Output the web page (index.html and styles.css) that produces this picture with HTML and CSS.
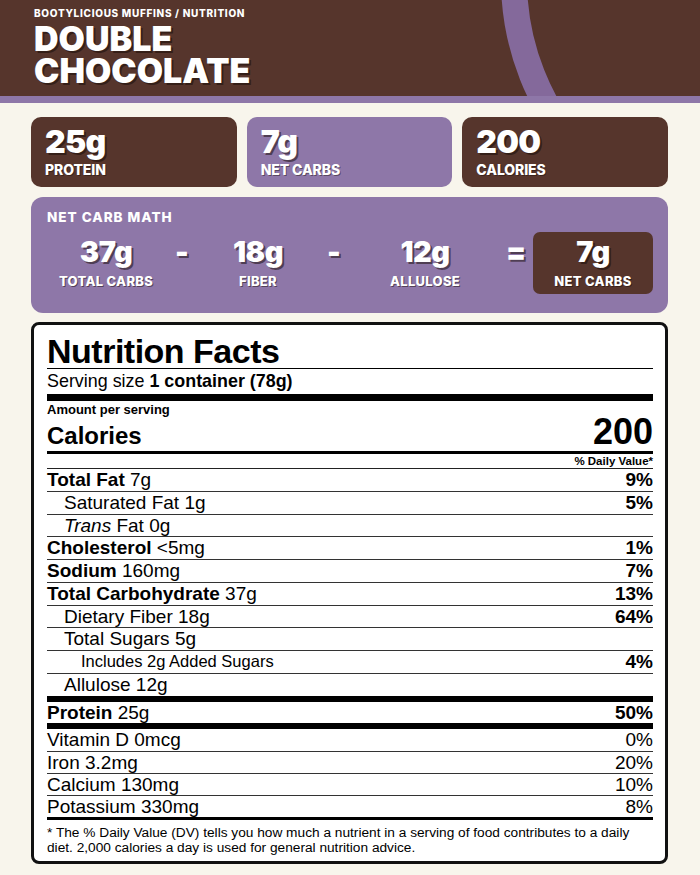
FILE: index.html
```html
<!DOCTYPE html>
<html lang="en">
<head>
<meta charset="utf-8">
<title>Double Chocolate – Nutrition</title>
<link rel="stylesheet" href="styles.css">
</head>
<body>
<header class="hero">
  <div class="ring"></div>
  <div class="crumb">BOOTYLICIOUS MUFFINS / NUTRITION</div>
  <h1 class="title"><span class="title-line">DOUBLE</span><span class="title-line">CHOCOLATE</span></h1>
</header>
<main class="content">
  <section class="stats">
    <div class="stat stat-brown"><div class="stat-num">25g</div><div class="stat-label">PROTEIN</div></div>
    <div class="stat stat-purple"><div class="stat-num">7g</div><div class="stat-label">NET CARBS</div></div>
    <div class="stat stat-brown"><div class="stat-num">200</div><div class="stat-label">CALORIES</div></div>
  </section>

  <section class="math">
    <div class="math-title">NET CARB MATH</div>
    <div class="math-row">
      <div class="term"><div class="term-num">37g</div><div class="term-label">TOTAL CARBS</div></div>
      <div class="op">-</div>
      <div class="term"><div class="term-num">18g</div><div class="term-label">FIBER</div></div>
      <div class="op">-</div>
      <div class="term"><div class="term-num">12g</div><div class="term-label">ALLULOSE</div></div>
      <div class="op">=</div>
      <div class="term result"><div class="term-num">7g</div><div class="term-label">NET CARBS</div></div>
    </div>
  </section>

  <section class="nf">
    <div class="nf-title">Nutrition Facts</div>
    <div class="nf-serving">Serving size <b>1 container (78g)</b></div>
    <div class="nf-amount">Amount per serving</div>
    <div class="nf-cal"><span class="nf-cal-label">Calories</span><span class="nf-cal-val">200</span></div>
    <div class="nf-dv">% Daily Value*</div>

    <div class="nf-row"><span><b>Total Fat</b> 7g</span><b>9%</b></div>
    <div class="nf-row indent1"><span>Saturated Fat 1g</span><b>5%</b></div>
    <div class="nf-row indent1"><span><i>Trans</i> Fat 0g</span><b></b></div>
    <div class="nf-row"><span><b>Cholesterol</b> &lt;5mg</span><b>1%</b></div>
    <div class="nf-row"><span><b>Sodium</b> 160mg</span><b>7%</b></div>
    <div class="nf-row"><span><b>Total Carbohydrate</b> 37g</span><b>13%</b></div>
    <div class="nf-row indent1"><span>Dietary Fiber 18g</span><b>64%</b></div>
    <div class="nf-row indent1"><span>Total Sugars 5g</span><b></b></div>
    <div class="nf-row indent2 small"><span>Includes 2g Added Sugars</span><b>4%</b></div>
    <div class="nf-row indent1 thick"><span>Allulose 12g</span><b></b></div>
    <div class="nf-row thick-protein"><span><b>Protein</b> 25g</span><b>50%</b></div>

    <div class="nf-row vit"><span>Vitamin D 0mcg</span><span>0%</span></div>
    <div class="nf-row vit"><span>Iron 3.2mg</span><span>20%</span></div>
    <div class="nf-row vit"><span>Calcium 130mg</span><span>10%</span></div>
    <div class="nf-row vit last"><span>Potassium 330mg</span><span>8%</span></div>

    <p class="nf-foot">* The % Daily Value (DV) tells you how much a nutrient in a serving of food contributes to a daily diet. 2,000 calories a day is used for general nutrition advice.</p>
  </section>
</main>
</body>
</html>
```

FILE: styles.css
```css
* { box-sizing: border-box; }

html, body {
  margin: 0;
  padding: 0;
}

body {
  background: #f8f5ec;
  font-family: "Inter", "Liberation Sans", sans-serif;
  color: #fff;
}

/* ---------- header ---------- */
.hero {
  position: relative;
  overflow: hidden;
  height: 103px;
  background: #56352c;
  border-bottom: 7px solid #8e77a8;
  padding: 7px 34px 0;
}

.ring {
  position: absolute;
  left: 501px;
  top: -290px;
  width: 540px;
  height: 540px;
  border-radius: 50%;
  border: 26px solid #84699b;
}

.crumb {
  position: relative;
  font-size: 10px;
  line-height: 12px;
  font-weight: 800;
  letter-spacing: 0.7px;
}

.title {
  position: relative;
  margin: 5px 0 0;
  font-size: 34px;
  font-weight: 900;
  text-shadow: 2px 2px 0 rgba(25, 12, 8, 0.55);
}

.title-line {
  display: block;
  height: 32px;
  line-height: 30px;
}

/* ---------- main ---------- */
.content {
  padding: 14px 32px 10px 31px;
}

.stats {
  display: grid;
  grid-template-columns: repeat(3, 1fr);
  gap: 10px;
}

.stat {
  height: 70px;
  border-radius: 10px;
  padding: 8px 14px 0;
}

.stat-brown { background: #56352c; }
.stat-purple { background: #8e77a8; }

.stat-num {
  font-size: 32px;
  line-height: 34px;
  font-weight: 900;
  letter-spacing: -0.8px;
  text-shadow: 2px 2px 0 rgba(25, 12, 8, 0.55);
}

.stat-label {
  margin-top: 3px;
  font-size: 14px;
  line-height: 16px;
  font-weight: 800;
  letter-spacing: -0.1px;
  text-shadow: 1px 1px 0 rgba(25, 12, 8, 0.45);
}

/* ---------- net carb math ---------- */
.math {
  margin-top: 10px;
  background: #8e77a8;
  border-radius: 12px;
  padding: 12px 15px 19px 16px;
}

.math-title {
  font-size: 13.5px;
  line-height: 16px;
  font-weight: 800;
  letter-spacing: 1px;
}

.math-row {
  margin-top: 7px;
  display: grid;
  grid-template-columns: 118px 34px 118px 34px 1fr 34px 120px;
  align-items: start;
}

.term {
  padding-top: 5px;
  text-align: center;
}

.term-num {
  font-size: 29px;
  line-height: 30px;
  font-weight: 900;
  letter-spacing: -0.5px;
  text-shadow: 2px 2px 0 rgba(25, 12, 8, 0.55);
}

.term-label {
  margin-top: 7px;
  font-size: 13px;
  line-height: 15px;
  font-weight: 800;
  letter-spacing: 0.3px;
  text-shadow: 1px 1px 0 rgba(25, 12, 8, 0.5);
}

.term.result {
  background: #56352c;
  border-radius: 7px;
  padding: 5px 0;
}

.op {
  padding-top: 5px;
  text-align: center;
  font-size: 29px;
  line-height: 30px;
  font-weight: 900;
  text-shadow: 2px 2px 0 rgba(25, 12, 8, 0.55);
}

/* ---------- nutrition facts ---------- */
.nf {
  margin-top: 9px;
  background: #fff;
  border: 3px solid #111;
  border-radius: 8px;
  padding: 10px 12px 6px 13px;
  color: #000;
  font-family: "Liberation Sans", Arial, sans-serif;
}

.nf-title {
  font-size: 34px;
  line-height: 33px;
  font-weight: 700;
  letter-spacing: -0.5px;
  border-bottom: 1px solid #000;
}

.nf-serving {
  margin-top: 2px;
  font-size: 17.9px;
  line-height: 20px;
  padding-bottom: 3px;
  border-bottom: 7px solid #000;
}

.nf-amount {
  margin-top: 1px;
  font-size: 13px;
  line-height: 15px;
  font-weight: 700;
}

.nf-cal {
  display: flex;
  justify-content: space-between;
  align-items: baseline;
  line-height: 30px;
  font-weight: 700;
  border-bottom: 3px solid #000;
}

.nf-cal-label { font-size: 24px; }
.nf-cal-val { font-size: 36px; }

.nf-dv {
  margin-top: 1px;
  text-align: right;
  font-size: 11.5px;
  line-height: 13px;
  font-weight: 700;
  border-bottom: 1px solid #222;
}

.nf-row {
  display: flex;
  justify-content: space-between;
  font-size: 19px;
  line-height: 21.75px;
  border-bottom: 1px solid #333;
  white-space: nowrap;
}

.nf-row.indent1 { padding-left: 17px; }
.nf-row.indent2 { padding-left: 34px; }
.nf-row.small > span { font-size: 16.5px; }

.nf-row.thick { border-bottom: 6.5px solid #000; }
.nf-row.thick-protein { border-bottom: 6px solid #000; }

.nf-row.vit { line-height: 21.25px; }
.nf-row.last { border-bottom: 3px solid #000; }

.nf-foot {
  margin: 5px 0 0;
  font-size: 13.7px;
  line-height: 15px;
}
```
